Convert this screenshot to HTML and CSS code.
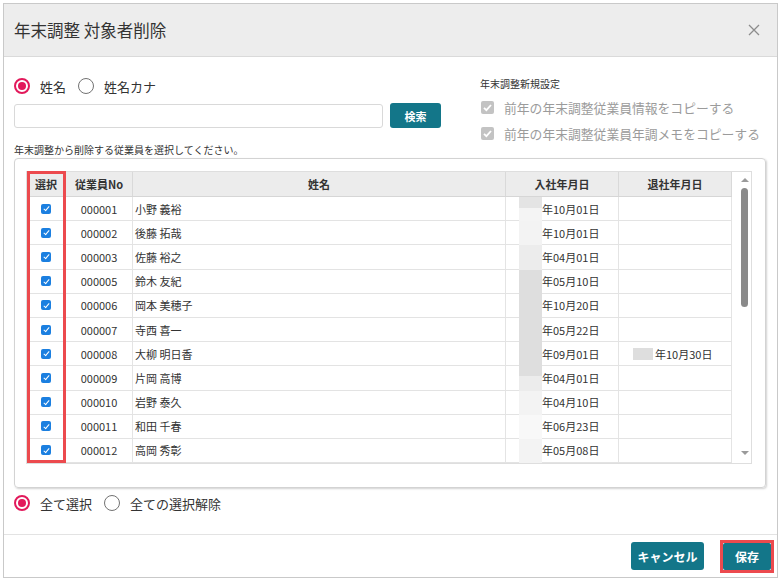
FILE: index.html
```html
<!DOCTYPE html>
<html lang="ja">
<head>
<meta charset="utf-8">
<title>年末調整 対象者削除</title>
<link rel="stylesheet" href="styles.css">
</head>
<body>
<div class="dialog">
  <div class="dlg-head">
    <h1 class="dlg-title">年末調整 対象者削除</h1>
    <svg class="close" width="12" height="12" viewBox="0 0 12 12"><path d="M1 1L11 11M11 1L1 11" stroke="#8c8c8c" stroke-width="1.3" fill="none"/></svg>
  </div>
  <div class="dlg-body">
    <div class="top">
      <div class="top-left">
        <div class="radios">
          <label class="radio on"><span class="rd"></span>姓名</label>
          <label class="radio"><span class="rd"></span>姓名カナ</label>
        </div>
        <div class="search">
          <input class="search-input" type="text">
          <button class="btn btn-sm">検索</button>
        </div>
        <p class="hint">年末調整から削除する従業員を選択してください。</p>
      </div>
      <div class="top-right">
        <p class="opt-title">年末調整新規設定</p>
        <div class="opt"><span class="cb-gray"><svg width="13" height="13" viewBox="0 0 13 13"><path d="M3 6.8L5.4 9.2L10 4" stroke="#fff" stroke-width="1.8" fill="none"/></svg></span>前年の年末調整従業員情報をコピーする</div>
        <div class="opt"><span class="cb-gray"><svg width="13" height="13" viewBox="0 0 13 13"><path d="M3 6.8L5.4 9.2L10 4" stroke="#fff" stroke-width="1.8" fill="none"/></svg></span>前年の年末調整従業員年調メモをコピーする</div>
      </div>
    </div>

    <div class="panel">
      <div class="grid-box">
        <div class="grid">
          <div class="row head">
            <div>選択</div><div>従業員No</div><div>姓名</div><div>入社年月日</div><div>退社年月日</div>
          </div>
          <div class="row"><div class="c-sel"><span class="cb"></span></div><div class="c-no">000001</div><div class="c-name">小野 義裕</div><div class="c-date"><span class="blk s1"></span>年10月01日</div><div class="c-date2"></div></div>
          <div class="row"><div class="c-sel"><span class="cb"></span></div><div class="c-no">000002</div><div class="c-name">後藤 拓哉</div><div class="c-date"><span class="blk s2"></span>年10月01日</div><div class="c-date2"></div></div>
          <div class="row"><div class="c-sel"><span class="cb"></span></div><div class="c-no">000003</div><div class="c-name">佐藤 裕之</div><div class="c-date"><span class="blk s3"></span>年04月01日</div><div class="c-date2"></div></div>
          <div class="row"><div class="c-sel"><span class="cb"></span></div><div class="c-no">000005</div><div class="c-name">鈴木 友紀</div><div class="c-date"><span class="blk s4"></span>年05月10日</div><div class="c-date2"></div></div>
          <div class="row"><div class="c-sel"><span class="cb"></span></div><div class="c-no">000006</div><div class="c-name">岡本 美穂子</div><div class="c-date"><span class="blk s4"></span>年10月20日</div><div class="c-date2"></div></div>
          <div class="row"><div class="c-sel"><span class="cb"></span></div><div class="c-no">000007</div><div class="c-name">寺西 喜一</div><div class="c-date"><span class="blk s4"></span>年05月22日</div><div class="c-date2"></div></div>
          <div class="row"><div class="c-sel"><span class="cb"></span></div><div class="c-no">000008</div><div class="c-name">大柳 明日香</div><div class="c-date"><span class="blk s4"></span>年09月01日</div><div class="c-date2"><span class="blk2"></span>年10月30日</div></div>
          <div class="row"><div class="c-sel"><span class="cb"></span></div><div class="c-no">000009</div><div class="c-name">片岡 高博</div><div class="c-date"><span class="blk s5"></span>年04月01日</div><div class="c-date2"></div></div>
          <div class="row"><div class="c-sel"><span class="cb"></span></div><div class="c-no">000010</div><div class="c-name">岩野 泰久</div><div class="c-date"><span class="blk s2"></span>年04月10日</div><div class="c-date2"></div></div>
          <div class="row"><div class="c-sel"><span class="cb"></span></div><div class="c-no">000011</div><div class="c-name">和田 千春</div><div class="c-date"><span class="blk s6"></span>年06月23日</div><div class="c-date2"></div></div>
          <div class="row"><div class="c-sel"><span class="cb"></span></div><div class="c-no">000012</div><div class="c-name">高岡 秀彰</div><div class="c-date"><span class="blk s2"></span>年05月08日</div><div class="c-date2"></div></div>
        </div>
        <div class="vscroll">
          <span class="arr-up"></span>
          <span class="thumb"></span>
          <span class="arr-down"></span>
        </div>
        <div class="hl-col"></div>
      </div>
    </div>

    <div class="radios bottom">
      <label class="radio on"><span class="rd"></span>全て選択</label>
      <label class="radio"><span class="rd"></span>全ての選択解除</label>
    </div>
  </div>
  <div class="dlg-foot">
    <button class="btn btn-cancel">キャンセル</button>
    <span class="hl-btn"><button class="btn btn-save">保存</button></span>
  </div>
</div>
</body>
</html>
```
FILE: styles.css
```css
* { box-sizing: border-box; }
body {
  margin: 3px;
  font-family: "Noto Sans CJK JP", "Noto Sans", sans-serif;
  color: #333;
  background: #fff;
}
.dialog {
  width: 775px;
  height: 575px;
  border: 1px solid #c9c9c9;
  display: flex;
  flex-direction: column;
}
.dlg-head {
  flex: none;
  height: 53px;
  background: #ededed;
  border-bottom: 1px solid #dadada;
  display: flex;
  align-items: center;
  justify-content: space-between;
  padding: 0 17px 0 10px;
}
.dlg-title {
  margin: 0;
  font-size: 16.5px;
  font-weight: 400;
  color: #333;
}
.dlg-body {
  flex: 1;
  padding: 19px 11px 0 10px;
}
.top { display: flex; }
.top-left { width: 427px; flex: none; }
.radios {
  display: flex;
  align-items: center;
  height: 20px;
  font-size: 13px;
  color: #333;
}
.radio {
  display: flex;
  align-items: center;
  gap: 10px;
  margin-right: 12px;
}
.rd {
  width: 16px;
  height: 16px;
  border-radius: 50%;
  border: 1.5px solid #727272;
  display: flex;
  align-items: center;
  justify-content: center;
}
.radio.on .rd { border: 2px solid #e2195b; }
.radio.on .rd::after {
  content: "";
  width: 8px;
  height: 8px;
  border-radius: 50%;
  background: #e2195b;
}
.search {
  display: flex;
  align-items: flex-end;
  gap: 7px;
  margin-top: 7px;
  height: 25px;
}
.search-input {
  width: 369px;
  height: 24px;
  border: 1px solid #d9d9d9;
  border-radius: 3px;
  background: #fff;
}
.btn {
  background: #137689;
  color: #fff;
  border: 0;
  border-radius: 3px;
  font-family: "Noto Sans CJK JP", sans-serif;
  font-weight: 700;
  font-size: 12px;
  padding: 0;
  display: flex;
  align-items: center;
  justify-content: center;
}
.btn-sm { width: 51px; height: 25px; font-size: 11px; }
.hint {
  margin: 15px 0 0;
  font-size: 10px;
  line-height: 14px;
}
.top-right { margin-left: 39px; padding-top: 1px; }
.opt-title {
  margin: 0 0 3px;
  font-size: 10px;
  line-height: 14px;
}
.opt {
  display: flex;
  align-items: center;
  gap: 10px;
  height: 26px;
  font-size: 12.8px;
  color: #9b9b9b;
}
.cb-gray {
  width: 13px;
  height: 13px;
  margin-left: 1px;
  background: #c3c3c3;
  border-radius: 2px;
  display: flex;
}
.panel {
  margin-top: 1px;
  border: 1px solid #d3d3d3;
  border-radius: 4px;
  box-shadow: 1px 1px 2px rgba(0,0,0,0.18);
  padding: 12px 13px 23px 11px;
}
.grid-box {
  position: relative;
  display: flex;
  height: 293px;
  border: 1px solid #dedede;
}
.grid { width: 705px; flex: none; overflow: hidden; }
.row {
  display: grid;
  grid-template-columns: 39px 67px 373px 113px 113px;
  height: 24.2px;
  border-bottom: 1px solid #e3e3e3;
  font-size: 11px;
  color: #333;
}
.row > div {
  border-right: 1px solid #e4e4e4;
  display: flex;
  align-items: center;
}
.row.head {
  height: 25px;
  background: #ececec;
  font-weight: 700;
  border-bottom-color: #d6d6d6;
}
.row.head > div { justify-content: center; border-right-color: #d9d9d9; }
.c-sel { justify-content: center; }
.c-no { justify-content: center; }
.c-name { padding-left: 2px; }
.c-date { padding-left: 13px; }
.c-date2 { padding-left: 14px; }
.cb {
  width: 10px;
  height: 10px;
  border-radius: 2px;
  background: #1b7fe0;
  position: relative;
}
.cb::after {
  content: "";
  position: absolute;
  left: 3.5px;
  top: 1.5px;
  width: 2px;
  height: 5px;
  border: solid #fff;
  border-width: 0 1.5px 1.5px 0;
  transform: rotate(40deg);
}
.blk {
  width: 23px;
  align-self: stretch;
  margin-bottom: -1px;
  background: #e6e6e6;
}
.blk.s1 { background: linear-gradient(#e4e4e4 0 45%, #f4f4f4 45%); }
.blk.s2 { background: #f3f3f3; }
.blk.s3 { background: #ececec; }
.blk.s4 { background: #dedede; }
.blk.s5 { background: linear-gradient(#dedede 0 40%, #ececec 40%); }
.blk.s6 { background: #f8f8f8; }
.blk2 {
  width: 20px;
  height: 12px;
  margin-right: 2px;
  background: #dedede;
}
.vscroll {
  width: 19px;
  flex: none;
  display: flex;
  flex-direction: column;
  align-items: flex-start;
  padding-left: 9px;
}
.arr-up {
  margin-top: 6px;
  margin-left: -0.5px;
  width: 0;
  height: 0;
  border-left: 4px solid transparent;
  border-right: 4px solid transparent;
  border-bottom: 4px solid #9a9a9a;
}
.thumb {
  margin-top: 6px;
  width: 7px;
  height: 119px;
  border-radius: 4px;
  background: #8a8a8a;
}
.arr-down {
  margin-top: auto;
  margin-bottom: 8px;
  margin-left: -0.5px;
  width: 0;
  height: 0;
  border-left: 4px solid transparent;
  border-right: 4px solid transparent;
  border-top: 4px solid #9a9a9a;
}
.hl-col {
  position: absolute;
  left: 0;
  top: -1px;
  width: 39px;
  height: 292px;
  border: 3px solid #ec4a4e;
  pointer-events: none;
}
.radios.bottom { margin-top: 5px; }
.dlg-foot {
  flex: none;
  height: 43px;
  border-top: 1px solid #e3e3e3;
  display: flex;
  align-items: center;
  justify-content: flex-end;
  gap: 16px;
  padding-right: 3px;
}
.btn-cancel { width: 73px; height: 28px; }
.hl-btn {
  display: flex;
  border: 3px solid #ec4a4e;
}
.btn-save { width: 48px; height: 27px; border-radius: 2px; }
```
